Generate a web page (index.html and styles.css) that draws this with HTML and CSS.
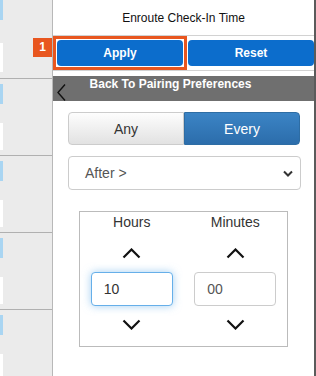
FILE: index.html
```html
<!DOCTYPE html>
<html lang="en">
<head>
    <meta charset="UTF-8">
    <meta name="viewport" content="width=device-width, initial-scale=1.0">
    <title>Enroute Check-In Time</title>
    <link rel="stylesheet" href="styles.css">
</head>
<body>
    <div class="screen">
        <aside class="sidebar">
            <div class="side-item first"><div class="edge-blue"></div><div class="edge-white"></div></div>
            <div class="side-item"><div class="edge-blue"></div><div class="edge-white"></div></div>
            <div class="side-item"><div class="edge-blue"></div><div class="edge-white"></div></div>
            <div class="side-item"><div class="edge-blue"></div><div class="edge-white"></div></div>
            <div class="side-item"><div class="edge-blue"></div><div class="edge-white"></div></div>
        </aside>

        <main class="panel">
            <div class="panel-title">Enroute Check-In Time</div>

            <div class="actions">
                <div class="highlight">
                    <span class="step-badge">1</span>
                    <button class="btn btn-apply">Apply</button>
                </div>
                <button class="btn btn-reset">Reset</button>
            </div>

            <div class="back-bar">
                <svg class="back-icon" viewBox="0 0 9 17" width="9" height="17">
                    <polyline points="8,0.5 1,8.5 8,16.5" fill="none" stroke="#111" stroke-width="1.4"/>
                </svg>
                <span class="back-text">Back To Pairing Preferences</span>
            </div>

            <div class="content">
                <div class="toggle">
                    <button class="toggle-btn">Any</button>
                    <button class="toggle-btn active">Every</button>
                </div>

                <div class="select-box">
                    <span>After &gt;</span>
                    <svg viewBox="0 0 10 7" width="10" height="7">
                        <polyline points="1,1.5 5,5.5 9,1.5" fill="none" stroke="#333" stroke-width="2"/>
                    </svg>
                </div>

                <div class="time-box">
                    <div class="time-col">
                        <div class="time-label">Hours</div>
                        <div class="spin up">
                            <svg viewBox="0 0 19 11" width="19" height="11"><polyline points="1.5,9.5 9.5,1.5 17.5,9.5" fill="none" stroke="#111" stroke-width="2.2"/></svg>
                        </div>
                        <input class="time-input focused" type="text" value="10">
                        <div class="spin down">
                            <svg viewBox="0 0 19 11" width="19" height="11"><polyline points="1.5,1.5 9.5,9.5 17.5,1.5" fill="none" stroke="#111" stroke-width="2.2"/></svg>
                        </div>
                    </div>
                    <div class="time-col">
                        <div class="time-label">Minutes</div>
                        <div class="spin up">
                            <svg viewBox="0 0 19 11" width="19" height="11"><polyline points="1.5,9.5 9.5,1.5 17.5,9.5" fill="none" stroke="#111" stroke-width="2.2"/></svg>
                        </div>
                        <input class="time-input" type="text" value="00">
                        <div class="spin down">
                            <svg viewBox="0 0 19 11" width="19" height="11"><polyline points="1.5,1.5 9.5,9.5 17.5,1.5" fill="none" stroke="#111" stroke-width="2.2"/></svg>
                        </div>
                    </div>
                </div>
            </div>
        </main>
    </div>
</body>
</html>
```

FILE: styles.css
```css
body {
    margin: 0;
    font-family: "Liberation Sans", Arial, sans-serif;
    background-color: #fff;
    color: #333;
}

.screen {
    display: flex;
    width: 316px;
    height: 376px;
    overflow: hidden;
}

/* left list, cut off */
.sidebar {
    width: 52px;
    flex: none;
    background-color: #ebebeb;
    border-right: 1px solid #b8b8b8;
}

.side-item {
    height: 77px;
    box-sizing: border-box;
    padding-top: 5px;
    border-bottom: 1px solid #b0b0b0;
}

.side-item.first {
    height: 79px;
    padding-top: 0;
}

.edge-blue {
    width: 3px;
    height: 20px;
    background-color: #a9d5f2;
}

.edge-white {
    width: 3px;
    height: 27px;
    margin-top: 19px;
    background-color: #fff;
}

.side-item.first .edge-white {
    margin-top: 23px;
    height: 29px;
}

/* main panel */
.panel {
    flex: 1;
    min-width: 0;
    background-color: #fff;
    border-right: 2px solid #5b5b5b;
}

.panel-title {
    height: 36px;
    box-sizing: border-box;
    padding-top: 11px;
    text-align: center;
    font-size: 12px;
    line-height: 14px;
    color: #111;
    border-bottom: 1px solid #d2d2d2;
}

.actions {
    display: flex;
    align-items: center;
    height: 35px;
    box-sizing: border-box;
    border-bottom: 1px solid #d2d2d2;
}

.highlight {
    position: relative;
    flex: none;
    width: 134px;
    height: 34px;
    box-sizing: border-box;
    padding: 1px;
    border: 3px solid #e8561f;
}

.step-badge {
    position: absolute;
    left: -23px;
    top: -1px;
    width: 19px;
    height: 19px;
    background-color: #e8561f;
    color: #fff;
    font-size: 12px;
    font-weight: bold;
    line-height: 19px;
    text-align: center;
}

.btn {
    border: none;
    border-radius: 4px;
    background-color: #0c6dcc;
    color: #fff;
    font-family: "Liberation Sans", Arial, sans-serif;
    font-size: 12px;
    font-weight: bold;
    padding: 0;
}

.btn-apply {
    width: 100%;
    height: 100%;
}

.btn-reset {
    flex: 1;
    height: 26px;
    margin-left: 1px;
}

.back-bar {
    display: flex;
    height: 25px;
    margin-top: 5px;
    background-color: #6f6f6f;
    color: #fff;
}

.back-icon {
    align-self: flex-end;
    margin-left: 4px;
    flex: none;
}

.back-text {
    flex: 1;
    padding-top: 1px;
    padding-right: 39px;
    text-align: center;
    font-size: 12px;
    font-weight: bold;
    line-height: 14px;
}

.content {
    padding: 11px 14px 0 15px;
}

.toggle {
    display: flex;
    height: 33px;
}

.toggle-btn {
    flex: 1;
    border: 1px solid #ccc;
    border-radius: 4px 0 0 4px;
    background: linear-gradient(#fdfdfd, #e2e2e2);
    color: #333;
    font-family: "Liberation Sans", Arial, sans-serif;
    font-size: 14px;
    padding: 0;
}

.toggle-btn.active {
    border-color: #2e6da4;
    border-radius: 0 4px 4px 0;
    background: linear-gradient(#3b84c5, #2c6dab);
    color: #fff;
}

.select-box {
    display: flex;
    align-items: center;
    justify-content: space-between;
    height: 34px;
    box-sizing: border-box;
    margin-top: 11px;
    margin-right: -1px;
    padding: 0 7px 0 16px;
    border: 1px solid #ccc;
    border-radius: 4px;
    font-size: 14px;
    color: #555;
}

.time-box {
    display: grid;
    grid-template-columns: 1fr 1fr;
    margin: 21px 12px 0 11px;
    padding: 2px 0 4px;
    border: 1px solid #bbb;
}

.time-col {
    display: flex;
    flex-direction: column;
    align-items: center;
}

.time-label {
    font-size: 14px;
    line-height: 16px;
    color: #333;
}

.spin {
    display: flex;
    align-items: center;
    justify-content: center;
    height: 42px;
}

.spin.up svg {
    margin-top: 4px;
}

.spin.down {
    height: 36px;
}

.time-input {
    width: 82px;
    height: 34px;
    box-sizing: border-box;
    padding: 0 12px;
    border: 1px solid #ccc;
    border-radius: 4px;
    font-family: "Liberation Sans", Arial, sans-serif;
    font-size: 14px;
    color: #555;
    outline: none;
}

.time-input.focused {
    border-color: #66afe9;
    box-shadow: 0 0 8px rgba(102, 175, 233, 0.6);
    color: #333;
}
```
